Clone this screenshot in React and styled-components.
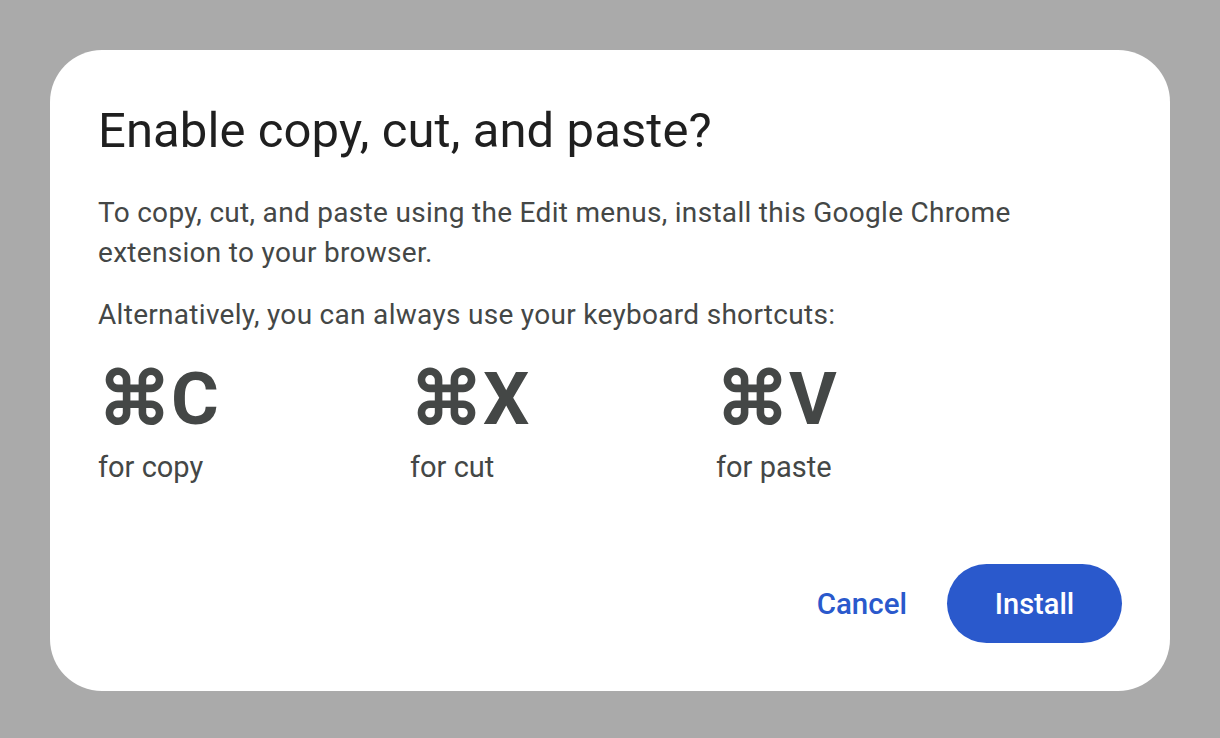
import React from "react";
import styled, { createGlobalStyle } from "styled-components";

const Global = createGlobalStyle`
  html, body { margin: 0; padding: 0; }
  body {
    background: #aaaaaa;
    font-family: Roboto, "Liberation Sans", sans-serif;
    width: 1220px;
    height: 738px;
    overflow: hidden;
  }
`;

const Backdrop = styled.div`
  box-sizing: border-box;
  width: 1220px;
  height: 738px;
  padding: 50px;
`;

const Dialog = styled.div`
  box-sizing: border-box;
  width: 1120px;
  height: 641px;
  background: #ffffff;
  border-radius: 52px;
  padding: 51px 48px 48px 48px;
  display: flex;
  flex-direction: column;
`;

const Title = styled.h1`
  margin: 0;
  font-family: Roboto, sans-serif;
  font-weight: 400;
  font-size: 49px;
  line-height: 60px;
  color: #1f1f1f;
  letter-spacing: 0.1px;
`;

const Para = styled.p`
  margin: ${(p) => p.$top}px 0 0 0;
  font-size: 28px;
  line-height: 40px;
  letter-spacing: 0.3px;
  color: #444746;
  max-width: 960px;
`;

const Shortcuts = styled.div`
  display: grid;
  grid-template-columns: 312px 306px 1fr;
  margin-top: 16px;
`;

const Shortcut = styled.div`
  display: flex;
  flex-direction: column;
`;

const Keys = styled.div`
  font-size: 73px;
  font-weight: 700;
  line-height: 96px;
  color: #444746;
`;

const Label = styled.div`
  font-size: 29px;
  line-height: 40px;
  color: #444746;
`;

const Actions = styled.div`
  margin-top: auto;
  display: flex;
  justify-content: flex-end;
  align-items: center;
  gap: 40px;
`;

const TextButton = styled.button`
  border: none;
  background: none;
  padding: 0;
  font-family: inherit;
  font-size: 29.5px;
  font-weight: 500;
  color: #2a59cc;
  cursor: pointer;
`;

const FilledButton = styled.button`
  border: none;
  width: 175px;
  height: 79px;
  border-radius: 40px;
  background: #2a59cc;
  color: #ffffff;
  font-family: inherit;
  font-size: 29px;
  font-weight: 500;
  cursor: pointer;
`;

const shortcuts = [
  { key: "C", label: "for copy" },
  { key: "X", label: "for cut" },
  { key: "V", label: "for paste" },
];

export default function App() {
  return (
    <>
      <Global />
      <Backdrop>
        <Dialog>
          <Title>Enable copy, cut, and paste?</Title>
          <Para $top={32}>
            To copy, cut, and paste using the Edit menus, install this Google Chrome extension to your browser.
          </Para>
          <Para $top={22}>Alternatively, you can always use your keyboard shortcuts:</Para>
          <Shortcuts>
            {shortcuts.map((s) => (
              <Shortcut key={s.key}>
                <Keys>⌘{s.key}</Keys>
                <Label>{s.label}</Label>
              </Shortcut>
            ))}
          </Shortcuts>
          <Actions>
            <TextButton>Cancel</TextButton>
            <FilledButton>Install</FilledButton>
          </Actions>
        </Dialog>
      </Backdrop>
    </>
  );
}
